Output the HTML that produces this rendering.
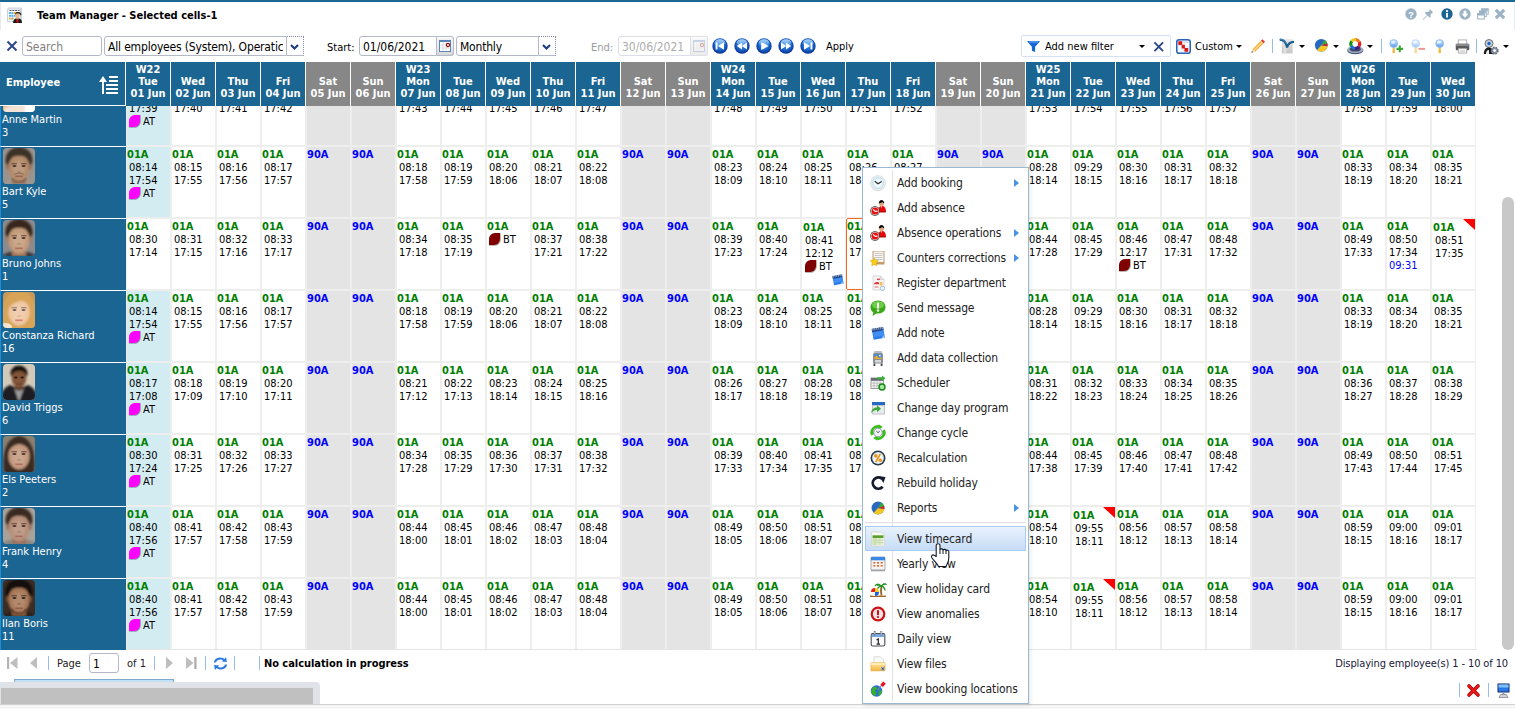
<!DOCTYPE html><html><head><meta charset="utf-8"><title>Team Manager</title><style>
*{box-sizing:border-box}
html,body{margin:0;padding:0}
body{width:1515px;height:709px;overflow:hidden;background:#fff;position:relative;font-family:"DejaVu Sans Condensed","Liberation Sans",sans-serif;font-size:11px;color:#000}
.abs{position:absolute}
svg{overflow:visible}
#topbar{left:0;top:0;width:1515px;height:2px;background:#1b6592}
#leftedge{left:0;top:3px;width:1px;height:27px;background:#e4ebf5}
#rightedge{left:1514px;top:3px;width:1px;height:27px;background:#e4ebf5}
#title{left:37px;top:9px;font-weight:bold;font-size:11px;line-height:14px;color:#000;white-space:nowrap}
.inp{position:absolute;top:36px;height:20px;border:1px solid #b5b8c8;border-radius:3px;background:#fff;font-size:12px;line-height:20px;padding-left:3px;white-space:nowrap;overflow:hidden;color:#000}
.trg{position:absolute;top:36px;height:20px;width:17px;border:1px solid #b5b8c8;border-left:none;border-radius:0 3px 3px 0;background:#fff}
.lbl{position:absolute;top:41px;font-size:11px;line-height:14px;white-space:nowrap}
.sep{position:absolute;width:1px;background:#98bdea}
.dd{position:absolute;margin-left:.7px;width:0;height:0;border-left:3px solid transparent;border-right:3px solid transparent;border-top:3px solid #000}
#hdr{left:0;top:62px;width:1515px;height:44px}
.hc{position:absolute;top:0;height:44px;width:44px;background:#1b6592;color:#fff;font-weight:bold;font-size:11px;line-height:12px;text-align:center;display:flex;flex-direction:column;justify-content:flex-end;padding-bottom:6px;white-space:nowrap}
.hc.we{background:#878787}
#emph{position:absolute;left:0;top:0;width:125px;height:43px;background:#1b6592;color:#fff;font-weight:bold;font-size:11px}
#grid{left:0;top:106px;width:1477px;height:544px;overflow:hidden}
.row{position:absolute;left:0;width:1477px;height:72px}
.emp{position:absolute;left:0;top:0;width:126px;height:72px;background:#1b6592;border-top:1px solid #fff;border-left:1px solid #1890e0;color:#fff;font-size:11px;line-height:14px;white-space:nowrap;overflow:hidden}
.emp .ph{position:absolute;left:2px;top:1px;width:32px;height:36px;border-radius:4px;overflow:hidden}
.emp .nm{position:absolute;left:1px;top:38px}
.emp .no{position:absolute;left:1px;top:51px}
.c{position:absolute;top:0;width:45px;height:72px;border:1px solid #eee;background:#fff;font-size:11px;line-height:13px;white-space:nowrap;overflow:hidden;padding-top:1px}
.c.we{background:#e4e4e4}
.c.fd{background:#d2ecf2}
.c.sh{padding-top:2px}
.c.sh .t{padding-left:3px}.c.sh b{padding-left:1px}.c.sh .mk{margin-left:2.700px}
.c.sel{border:1px solid #f06a1a;border-radius:2px}
.c b{display:block}
.g{color:#007f00}
.bl{color:#0000ff}
.t{display:block;padding-left:2px}
.mk{display:inline-block;width:11px;height:11.500px;border-radius:6px 0 6px 0;margin:0 3.300px 0 1.700px;vertical-align:-1.800px;box-shadow:.5px .5px 0 .3px rgba(90,90,90,.55)}
.rc{position:absolute;right:0;top:0;width:0;height:0;border-top:11.500px solid #f00;border-left:12px solid transparent}
#paging{left:0;top:650px;width:1515px;height:28px;font-size:11px;line-height:14px;color:#222}
#menu{left:862px;top:167px;width:167px;height:537px;background:#fff;border:1px solid #98b8d4;font-size:12px;color:#222;letter-spacing:-.15px;box-shadow:2px 2px 3px rgba(0,0,0,.08)}
#menu .vl{position:absolute;left:29px;top:2px;width:1px;height:531px;background:#e2e2e2}
.mi{position:absolute;left:2px;width:161px;height:25px;line-height:26px;padding-left:32px;white-space:nowrap}
.mi.hl{border:1px solid #a9cbf5;background:linear-gradient(#e9f2fd,#c6dcf6);line-height:24px;padding-left:31px}
.ma{position:absolute;left:149px;top:9px;width:0;height:0;border-top:4.500px solid transparent;border-bottom:4.500px solid transparent;border-left:5px solid #4a92e6}
</style></head><body>
<svg width="0" height="0" style="position:absolute"><defs>
<radialGradient id="gb" cx=".5" cy=".42" r=".58"><stop offset="0" stop-color="#4aa4ee"/><stop offset=".55" stop-color="#1c68d0"/><stop offset="1" stop-color="#08308c"/></radialGradient>
<linearGradient id="gbh" x1="0" y1="0" x2="0" y2="1"><stop offset="0" stop-color="#d8f0ff" stop-opacity=".85"/><stop offset="1" stop-color="#9cd4ff" stop-opacity=".1"/></linearGradient>
<linearGradient id="ggray2" x1="0" y1="0" x2="0" y2="1"><stop offset="0" stop-color="#e6e6e6"/><stop offset="1" stop-color="#c6c6c6"/></linearGradient><linearGradient id="ggray" x1="0" y1="0" x2="0" y2="1"><stop offset="0" stop-color="#f4f4f4"/><stop offset="1" stop-color="#b8b8b8"/></linearGradient>
<linearGradient id="gfold" x1="0" y1="0" x2="0" y2="1"><stop offset="0" stop-color="#ffe9a8"/><stop offset="1" stop-color="#f3b53c"/></linearGradient>
<linearGradient id="gmag" x1="0" y1="0" x2="0" y2="1"><stop offset="0" stop-color="#cfe6ff"/><stop offset="1" stop-color="#5aa0f0"/></linearGradient>
<filter id="bl1"><feGaussianBlur stdDeviation="1.1"/></filter>
<filter id="bl2"><feGaussianBlur stdDeviation="1.8"/></filter>
<filter id="bl05"><feGaussianBlur stdDeviation="0.6"/></filter>
</defs></svg>
<div class="abs" id="topbar"></div><div class="abs" id="leftedge"></div><div class="abs" id="rightedge"></div>
<svg class="abs" style="left:7px;top:7px" width="16" height="16" viewBox="0 0 16 16" ><rect x="1.500" y="1" width="13" height="12.500" fill="#f8fbff" stroke="#c0c8d4" stroke-width=".8"/><rect x=".6" y="2" width="13" height="12.500" fill="#fdfeff" stroke="#c0c8d4" stroke-width=".8"/><path d="M2.500 3.500h10" stroke="#555" stroke-width="1" stroke-dasharray="2 .8"/><g fill="#4ab0f0"><rect x="2" y="5" width="1.800" height="2"/><rect x="4.300" y="5" width="1.800" height="2"/><rect x="11" y="5" width="1.800" height="2"/><rect x="2" y="7.800" width="1.800" height="2"/><rect x="4.300" y="7.800" width="1.800" height="2"/><rect x="6.600" y="7.800" width="1.800" height="2"/><rect x="4.300" y="10.600" width="1.800" height="2"/></g><g fill="#f8a818"><rect x="6.600" y="5" width="1.800" height="2"/><rect x="8.900" y="5" width="1.800" height="2"/><rect x="2" y="10.600" width="1.800" height="2"/><rect x="5.500" y="10.600" width="1.200" height="2"/></g><path d="M6 16c0-3 1.500-4.800 4.500-4.800S15 13 15 16z" fill="#181818"/><path d="M9.300 11.400h2.400L10.500 14z" fill="#fff"/><path d="M10 11.500h1l.6 3.500-1.100 1-1.100-1z" fill="#e01010"/><ellipse cx="10.500" cy="8.800" rx="2.300" ry="2.700" fill="#e8b888"/><path d="M8 8.200c0-2.400 5-3 5.400 0 0 0 .6.200 1-.3-.2-2.500-2-3-3.800-3S7.800 6 8 8.200z" fill="#181818"/></svg>
<div class="abs" id="title">Team Manager - Selected cells-1</div>
<svg class="abs" style="left:1405px;top:8px" width="12" height="12" viewBox="0 0 12 12" ><circle cx="6" cy="6" r="5.700" fill="#9bb3c4"/><text x="6" y="9.600" text-anchor="middle" font-family="Liberation Sans,sans-serif" font-weight="bold" font-size="9.500" fill="#fff">?</text></svg>
<svg class="abs" style="left:1422px;top:8px" width="12" height="12" viewBox="0 0 12 12" ><path d="M7.500 .8l3.700 3.700-1.200.4-1.500 1.500.2 2.400-1 1-2.200-2.200L1 12l-.4-.4 4.400-4.500L2.800 4.900l1-1 2.400.2 1.500-1.500z" fill="#9bb3c4"/></svg>
<svg class="abs" style="left:1441px;top:8px" width="12" height="12" viewBox="0 0 12 12" ><circle cx="6" cy="6" r="5.700" fill="#1b6592"/><rect x="5.100" y="5" width="1.800" height="4.600" fill="#fff"/><circle cx="6" cy="3.200" r="1.100" fill="#fff"/></svg>
<svg class="abs" style="left:1459px;top:8px" width="12" height="12" viewBox="0 0 12 12" ><circle cx="6" cy="6" r="5.700" fill="#9bb3c4"/><path d="M4.600 2.800h2.800v3h2L6 9.800 2.600 5.800h2z" fill="#fff"/></svg>
<svg class="abs" style="left:1477px;top:8px" width="12" height="12" viewBox="0 0 12 12" ><rect x="4.500" y=".8" width="6.700" height="5.500" fill="#fff" stroke="#9bb3c4" stroke-width="1"/><rect x="4.500" y=".8" width="6.700" height="2" fill="#9bb3c4"/><rect x="2.500" y="3" width="6.700" height="5.500" fill="#fff" stroke="#9bb3c4" stroke-width="1"/><rect x="2.500" y="3" width="6.700" height="2" fill="#9bb3c4"/><rect x=".6" y="5.500" width="6.700" height="5.500" fill="#fff" stroke="#9bb3c4" stroke-width="1"/><rect x=".6" y="5.500" width="6.700" height="2" fill="#9bb3c4"/></svg>
<svg class="abs" style="left:1494px;top:8px" width="12" height="12" viewBox="0 0 12 12" ><path d="M1.800 1.800L10.200 10.200M10.200 1.800L1.800 10.200" stroke="#9bb3c4" stroke-width="3.200" fill="none"/></svg>
<svg class="abs" style="left:6px;top:40px" width="12" height="12" viewBox="0 0 12 12" ><path d="M1.5 1.5L10.5 10.5M10.5 1.5L1.5 10.5" stroke="#2c4888" stroke-width="2" fill="none"/></svg>
<div class="inp" style="left:22px;width:80px;color:#808080">Search</div>
<div class="inp" style="left:104px;width:183px;border-radius:3px 0 0 3px;letter-spacing:-.17px">All employees (System), Operatic<i class="abs" style="right:0;top:0;width:3px;height:18px;background:#fff"></i></div>
<div class="trg" style="left:287px;border-radius:0;border-style:dotted solid solid none;border-top-color:#8888b8;border-right:1px dotted #8888b8"><svg class="abs" style="left:3px;top:6.5px" width="9" height="6" viewBox="0 0 9 6" ><path d="M1 1L4.500 4.500 8 1" stroke="#1c3c80" stroke-width="2.100" fill="none"/></svg></div>
<div class="lbl" style="left:327px">Start:</div>
<div class="inp" style="left:359px;width:78px;border-radius:3px 0 0 3px">01/06/2021</div>
<div class="trg" style="left:437px;background:linear-gradient(#fff 0,#fff 1px,#f3f3f3 1px,#efefef 50%,#d6d6d6 100%)"><svg class="abs" style="left:2px;top:3px" width="12" height="12" viewBox="0 0 12 12" ><rect x=".5" y=".5" width="11" height="11" fill="#fff" stroke="#5c84ba"/><rect x="0" y="0" width="12" height="2" fill="#5c84ba"/><path d="M1.500 5h9M1.500 8h9M4 2.500v8.500M7 2.500v8.500" stroke="#dcdcdc" stroke-width="1"/><circle cx="9" cy="5" r="1.600" fill="#fff" stroke="#8e0000" stroke-width="1.100"/></svg></div>
<div class="inp" style="left:456px;width:83px;border-radius:3px 0 0 3px;letter-spacing:-.2px">Monthly</div>
<div class="trg" style="left:539px;border-radius:0;border-style:dotted solid solid none;border-top-color:#8888b8;border-right:1px dotted #8888b8"><svg class="abs" style="left:3px;top:6.5px" width="9" height="6" viewBox="0 0 9 6" ><path d="M1 1L4.500 4.500 8 1" stroke="#1c3c80" stroke-width="2.100" fill="none"/></svg></div>
<div class="lbl" style="left:591px;color:#9c9c9c">End:</div>
<div class="inp" style="left:618px;width:73px;color:#adadad;border-color:#dcdee8;border-radius:3px 0 0 3px">30/06/2021</div>
<div class="trg" style="left:691px;border-color:#dcdee8;background:linear-gradient(#fff 0,#fff 1px,#f8f8f8 1px,#ececec 100%)"><svg class="abs" style="left:2px;top:3px" width="12" height="12" viewBox="0 0 12 12" ><g opacity=".3"><rect x=".5" y=".5" width="11" height="11" fill="#fff" stroke="#5c84ba"/><rect x="0" y="0" width="12" height="2" fill="#5c84ba"/><path d="M1.500 5h9M1.500 8h9M4 2.500v8.500M7 2.500v8.500" stroke="#dcdcdc" stroke-width="1"/><circle cx="9" cy="5" r="1.600" fill="#fff" stroke="#8e0000" stroke-width="1.100"/></g></svg></div>
<svg class="abs" style="left:712px;top:37.8px" width="16" height="16" viewBox="0 0 16 16" ><g><circle cx="8" cy="8" r="7.700" fill="url(#gb)"/><ellipse cx="8" cy="4.800" rx="5.400" ry="3.600" fill="url(#gbh)"/><rect x="3.600" y="4.500" width="1.900" height="7" fill="#fff"/><path d="M12 4.300v7.400L6 8z" fill="#fff"/></g></svg>
<svg class="abs" style="left:734px;top:37.8px" width="16" height="16" viewBox="0 0 16 16" ><g><circle cx="8" cy="8" r="7.700" fill="url(#gb)"/><ellipse cx="8" cy="4.800" rx="5.400" ry="3.600" fill="url(#gbh)"/><path d="M8 4.500v7L2.800 8zM13 4.500v7L7.800 8z" fill="#fff"/></g></svg>
<svg class="abs" style="left:756px;top:37.8px" width="16" height="16" viewBox="0 0 16 16" ><g><circle cx="8" cy="8" r="7.700" fill="url(#gb)"/><ellipse cx="8" cy="4.800" rx="5.400" ry="3.600" fill="url(#gbh)"/><path d="M5.200 3.900v8.200L12.600 8z" fill="#fff"/></g></svg>
<svg class="abs" style="left:778px;top:37.8px" width="16" height="16" viewBox="0 0 16 16" ><g><circle cx="8" cy="8" r="7.700" fill="url(#gb)"/><ellipse cx="8" cy="4.800" rx="5.400" ry="3.600" fill="url(#gbh)"/><path d="M8 4.500v7L13.200 8zM3 4.500v7L8.200 8z" fill="#fff"/></g></svg>
<svg class="abs" style="left:800px;top:37.8px" width="16" height="16" viewBox="0 0 16 16" ><g><circle cx="8" cy="8" r="7.700" fill="url(#gb)"/><ellipse cx="8" cy="4.800" rx="5.400" ry="3.600" fill="url(#gbh)"/><rect x="10.500" y="4.500" width="1.900" height="7" fill="#fff"/><path d="M4 4.300v7.400L10 8z" fill="#fff"/></g></svg>
<div class="lbl" style="left:826px;top:40px">Apply</div>
<div class="abs" style="left:1021px;top:35px;width:150px;height:22px;border:1px solid #d4e1f2;border-radius:2px"></div>
<svg class="abs" style="left:1026.5px;top:38.5px" width="13" height="14.5" viewBox="0 0 16 16" ><path d="M1 1.5h14c.6 0 .6.9.2 1.4L10 8.6V15l-4-1.6V8.6L.8 2.9C.4 2.4.4 1.500 1 1.500z" fill="#1565d8"/><path d="M2 2h12l-1 1.300H3z" fill="#7fb4ff"/></svg>
<div class="lbl" style="left:1045px;top:40px">Add new filter</div>
<div class="dd" style="left:1138px;top:45px"></div>
<svg class="abs" style="left:1153px;top:40.5px" width="11.5" height="11.5" viewBox="0 0 12 12" ><path d="M1.5 1.5L10.5 10.5M10.5 1.5L1.5 10.5" stroke="#2c4888" stroke-width="2" fill="none"/></svg>
<svg class="abs" style="left:1175.5px;top:38.5px" width="15" height="15" viewBox="0 0 16 16" ><rect x=".8" y=".8" width="14.400" height="14.400" rx="2.500" fill="#eef3fa" stroke="#2a62b8" stroke-width="1.600"/><rect x="2.500" y="2.500" width="11" height="2" fill="#d8dde6"/><path d="M2.5 2.5h4v3.500h3v3.500h3.500v4h-4v-3.500h-3v-3.500h-3.500z" fill="#d81818"/><path d="M2.5 8h3v5.500h-3zM9.500 4.500h4v2.500h-4z" fill="#fff" opacity=".7"/></svg>
<div class="lbl" style="left:1195px;top:40px">Custom</div>
<div class="dd" style="left:1235px;top:45px"></div>
<svg class="abs" style="left:1250px;top:38px" width="16.5" height="16" viewBox="0 0 16 16" ><path d="M12.2 1.200l2.600 2.600-1.600 1.600-2.600-2.600z" fill="#e04040"/><path d="M10.600 2.800l2.600 2.600-8.400 8.400-2.600-2.600z" fill="#f0b040"/><path d="M11.400 3.600l1 1-8.400 8.400-1-1z" fill="#ffd880"/><path d="M2.200 11.200l2.600 2.600-3.600 1z" fill="#f4d8b0"/><path d="M1.200 14.800l.5-1.700 1.200 1.200z" fill="#444"/></svg>
<div class="sep" style="left:1272px;top:39px;height:14px"></div>
<svg class="abs" style="left:1279px;top:38px" width="16" height="16" viewBox="0 0 16 16" ><rect x="2.900" y="1.100" width="10.700" height="14.300" fill="url(#ggray2)"/><rect x="4.500" y="8" width="3" height="7" fill="#ececec" opacity=".6"/><path d="M.7 1.600C4.500 1.600 7.300 4.500 8 9.500M15 3.800C11.500 3.800 8.800 5.800 8 9.500" fill="none" stroke="#1b5c8e" stroke-width="2.200"/><path d="M.7 1.200C4 1.200 6.500 3 7.600 6" fill="none" stroke="#4a9ad0" stroke-width=".8"/></svg>
<div class="dd" style="left:1298px;top:45px"></div>
<svg class="abs" style="left:1313.7px;top:38px" width="14.5" height="14.5" viewBox="0 0 16 16" ><circle cx="8" cy="8" r="7" fill="#2868c0"/><path d="M8 8L14.900 9.200A7 7 0 0 1 3.400 13.300z" fill="#f4c820"/><path d="M8 8L11.500 1.900A7 7 0 0 1 14.700 6z" fill="#38a838"/><path d="M8 8L14.700 6A7 7 0 0 1 14.900 9.200z" fill="#e02020"/></svg>
<div class="dd" style="left:1332px;top:45px"></div>
<svg class="abs" style="left:1347px;top:38px" width="16.5" height="16.5" viewBox="0 0 16 16" ><ellipse cx="8" cy="12.200" rx="7.800" ry="3.500" fill="#4e5c78"/><ellipse cx="8" cy="11.200" rx="7.800" ry="3.400" fill="#a4b0c6"/><ellipse cx="8" cy="11" rx="5.600" ry="2.100" fill="#3c4864"/><circle cx="8" cy="5.800" r="4.200" fill="none" stroke="#e82020" stroke-width="3.200" stroke-dasharray="4.500 21.900" stroke-dashoffset="-0.00" transform="rotate(-30 8 5.800)"/><circle cx="8" cy="5.800" r="4.200" fill="none" stroke="#4a1a80" stroke-width="3.200" stroke-dasharray="4.500 21.900" stroke-dashoffset="-4.40" transform="rotate(-30 8 5.800)"/><circle cx="8" cy="5.800" r="4.200" fill="none" stroke="#1870d0" stroke-width="3.200" stroke-dasharray="4.500 21.900" stroke-dashoffset="-8.80" transform="rotate(-30 8 5.800)"/><circle cx="8" cy="5.800" r="4.200" fill="none" stroke="#189018" stroke-width="3.200" stroke-dasharray="4.500 21.900" stroke-dashoffset="-13.20" transform="rotate(-30 8 5.800)"/><circle cx="8" cy="5.800" r="4.200" fill="none" stroke="#e8c820" stroke-width="3.200" stroke-dasharray="4.500 21.900" stroke-dashoffset="-17.60" transform="rotate(-30 8 5.800)"/><circle cx="8" cy="5.800" r="4.200" fill="none" stroke="#f07818" stroke-width="3.200" stroke-dasharray="4.500 21.900" stroke-dashoffset="-22.00" transform="rotate(-30 8 5.800)"/><circle cx="8" cy="5.800" r="2.600" fill="#fff"/></svg>
<div class="dd" style="left:1366px;top:45px"></div>
<div class="sep" style="left:1381px;top:39px;height:14px"></div>
<svg class="abs" style="left:1389px;top:38.5px" width="15" height="15" viewBox="0 0 16 16" ><path d="M4.200 8h1.600l.6 6.500c0 .8-2.800.8-2.800 0z" fill="#f0b838"/><circle cx="5" cy="4.800" r="4.200" fill="url(#gmag)" stroke="#88b8ec" stroke-width=".8"/><ellipse cx="4.400" cy="3.400" rx="2.400" ry="1.600" fill="#fff" opacity=".7"/><path d="M11.500 7v7M8 10.500h7" stroke="#38a838" stroke-width="2.200"/></svg>
<svg class="abs" style="left:1410.5px;top:38.5px" width="15" height="15" viewBox="0 0 16 16" ><g opacity=".55"><path d="M4.200 8h1.600l.6 6.500c0 .8-2.800.8-2.800 0z" fill="#f0b838"/><circle cx="5" cy="4.800" r="4.200" fill="url(#gmag)" stroke="#88b8ec" stroke-width=".8"/><ellipse cx="4.400" cy="3.400" rx="2.400" ry="1.600" fill="#fff" opacity=".7"/></g><path d="M8 10.500h7" stroke="#f09090" stroke-width="2"/></svg>
<svg class="abs" style="left:1434.5px;top:38.5px" width="15" height="15" viewBox="0 0 16 16" ><path d="M4.200 8h1.600l.6 6.500c0 .8-2.800.8-2.800 0z" fill="#f0b838"/><circle cx="5" cy="4.800" r="4.200" fill="url(#gmag)" stroke="#88b8ec" stroke-width=".8"/><ellipse cx="4.400" cy="3.400" rx="2.400" ry="1.600" fill="#fff" opacity=".7"/></svg>
<svg class="abs" style="left:1455px;top:38.5px" width="15" height="15" viewBox="0 0 16 16" ><rect x="3.500" y="1" width="9" height="5" fill="#fff" stroke="#999" stroke-width=".8"/><rect x=".8" y="5" width="14.400" height="7" rx="1.200" fill="#5a5a5a"/><rect x=".8" y="5" width="14.400" height="2.500" rx="1.200" fill="#8a8a8a"/><rect x="3.500" y="10" width="9" height="5" fill="#fff" stroke="#999" stroke-width=".8"/><path d="M5 12h6M5 13.500h6" stroke="#bbb" stroke-width=".7"/><circle cx="13.300" cy="7.300" r=".8" fill="#5090f0"/></svg>
<div class="sep" style="left:1476px;top:39px;height:14px"></div>
<svg class="abs" style="left:1482.5px;top:38.5px" width="16" height="16" viewBox="0 0 16 16" ><circle cx="6" cy="4.500" r="4" fill="#c8ccd2" stroke="#555" stroke-width=".8"/><circle cx="6" cy="4.500" r="1.700" fill="#1868d0"/><path d="M.8 15c0-4 1.800-6.500 5.200-6.500 2 0 3.400 1 4 2.500v4z" fill="#1a1a1a"/><path d="M3 15c0-2.500 1-4 3-4v4z" fill="#eee"/><circle cx="11.600" cy="11.600" r="3.300" fill="#8894a4" stroke="#687080" stroke-width="1.600" stroke-dasharray="1.700 1"/><circle cx="11.600" cy="11.600" r="1.300" fill="#fff"/></svg>
<div class="dd" style="left:1502px;top:45px"></div>
<div class="abs" id="hdr"><div id="emph"><span class="abs" style="left:6px;top:14px;line-height:14px">Employee</span><svg class="abs" style="left:99px;top:14px" width="19" height="18" viewBox="0 0 19 18" ><path d="M4 0L8 6H5V18H3V6H0zM10 0h9v2h-9zM10 4h9v2h-9zM7 8h12v2H7zM7 12h12v2H7zM7 16h12v2H7z" fill="#fff"/></svg></div>
<div class="hc" style="left:126px">W22<br>Tue<br>01 Jun</div>
<div class="hc" style="left:171px">Wed<br>02 Jun</div>
<div class="hc" style="left:216px">Thu<br>03 Jun</div>
<div class="hc" style="left:261px">Fri<br>04 Jun</div>
<div class="hc we" style="left:306px">Sat<br>05 Jun</div>
<div class="hc we" style="left:351px">Sun<br>06 Jun</div>
<div class="hc" style="left:396px">W23<br>Mon<br>07 Jun</div>
<div class="hc" style="left:441px">Tue<br>08 Jun</div>
<div class="hc" style="left:486px">Wed<br>09 Jun</div>
<div class="hc" style="left:531px">Thu<br>10 Jun</div>
<div class="hc" style="left:576px">Fri<br>11 Jun</div>
<div class="hc we" style="left:621px">Sat<br>12 Jun</div>
<div class="hc we" style="left:666px">Sun<br>13 Jun</div>
<div class="hc" style="left:711px">W24<br>Mon<br>14 Jun</div>
<div class="hc" style="left:756px">Tue<br>15 Jun</div>
<div class="hc" style="left:801px">Wed<br>16 Jun</div>
<div class="hc" style="left:846px">Thu<br>17 Jun</div>
<div class="hc" style="left:891px">Fri<br>18 Jun</div>
<div class="hc we" style="left:936px">Sat<br>19 Jun</div>
<div class="hc we" style="left:981px">Sun<br>20 Jun</div>
<div class="hc" style="left:1026px">W25<br>Mon<br>21 Jun</div>
<div class="hc" style="left:1071px">Tue<br>22 Jun</div>
<div class="hc" style="left:1116px">Wed<br>23 Jun</div>
<div class="hc" style="left:1161px">Thu<br>24 Jun</div>
<div class="hc" style="left:1206px">Fri<br>25 Jun</div>
<div class="hc we" style="left:1251px">Sat<br>26 Jun</div>
<div class="hc we" style="left:1296px">Sun<br>27 Jun</div>
<div class="hc" style="left:1341px">W26<br>Mon<br>28 Jun</div>
<div class="hc" style="left:1386px">Tue<br>29 Jun</div>
<div class="hc" style="left:1431px">Wed<br>30 Jun</div>
</div>
<div class="abs" id="grid">
<div class="row" style="top:-32px">
<div class="emp"><div class="ph"><svg width="32" height="36" viewBox="0 0 32 36" style="display:block"><rect width="32" height="36" fill="#e8b48c"/><g filter="url(#bl1)"><path d="M-2 38c2-7 8-8 12-9h12c5 1 10 3 12 9z" fill="#f4e4d8"/><rect x="22" y="28" width="12" height="10" fill="#fff"/><ellipse cx="16" cy="18" rx="9" ry="11" fill="#f0c0a0"/></g></svg></div><span class="nm">Anne Martin</span><span class="no">3</span></div>
<div class="c fd" style="left:126px"><b class="g">01A</b><span class="t">07:59</span><span class="t">17:39</span><span class="t" style="padding-left:0"><i class="mk" style="background:#ff00ff"></i>AT</span></div>
<div class="c" style="left:171px"><b class="g">01A</b><span class="t">08:00</span><span class="t">17:40</span></div>
<div class="c" style="left:216px"><b class="g">01A</b><span class="t">08:01</span><span class="t">17:41</span></div>
<div class="c" style="left:261px"><b class="g">01A</b><span class="t">08:02</span><span class="t">17:42</span></div>
<div class="c we" style="left:306px"><b class="bl">90A</b></div>
<div class="c we" style="left:351px"><b class="bl">90A</b></div>
<div class="c" style="left:396px"><b class="g">01A</b><span class="t">08:03</span><span class="t">17:43</span></div>
<div class="c" style="left:441px"><b class="g">01A</b><span class="t">08:04</span><span class="t">17:44</span></div>
<div class="c" style="left:486px"><b class="g">01A</b><span class="t">08:05</span><span class="t">17:45</span></div>
<div class="c" style="left:531px"><b class="g">01A</b><span class="t">08:06</span><span class="t">17:46</span></div>
<div class="c" style="left:576px"><b class="g">01A</b><span class="t">08:07</span><span class="t">17:47</span></div>
<div class="c we" style="left:621px"><b class="bl">90A</b></div>
<div class="c we" style="left:666px"><b class="bl">90A</b></div>
<div class="c" style="left:711px"><b class="g">01A</b><span class="t">08:08</span><span class="t">17:48</span></div>
<div class="c" style="left:756px"><b class="g">01A</b><span class="t">08:09</span><span class="t">17:49</span></div>
<div class="c" style="left:801px"><b class="g">01A</b><span class="t">08:10</span><span class="t">17:50</span></div>
<div class="c" style="left:846px"><b class="g">01A</b><span class="t">08:11</span><span class="t">17:51</span></div>
<div class="c" style="left:891px"><b class="g">01A</b><span class="t">08:12</span><span class="t">17:52</span></div>
<div class="c we" style="left:936px"><b class="bl">90A</b></div>
<div class="c we" style="left:981px"><b class="bl">90A</b></div>
<div class="c" style="left:1026px"><b class="g">01A</b><span class="t">08:13</span><span class="t">17:53</span></div>
<div class="c" style="left:1071px"><b class="g">01A</b><span class="t">08:14</span><span class="t">17:54</span></div>
<div class="c" style="left:1116px"><b class="g">01A</b><span class="t">08:15</span><span class="t">17:55</span></div>
<div class="c" style="left:1161px"><b class="g">01A</b><span class="t">08:16</span><span class="t">17:56</span></div>
<div class="c" style="left:1206px"><b class="g">01A</b><span class="t">08:17</span><span class="t">17:57</span></div>
<div class="c we" style="left:1251px"><b class="bl">90A</b></div>
<div class="c we" style="left:1296px"><b class="bl">90A</b></div>
<div class="c" style="left:1341px"><b class="g">01A</b><span class="t">08:18</span><span class="t">17:58</span></div>
<div class="c" style="left:1386px"><b class="g">01A</b><span class="t">08:19</span><span class="t">17:59</span></div>
<div class="c" style="left:1431px"><b class="g">01A</b><span class="t">08:20</span><span class="t">18:00</span></div>
</div>
<div class="row" style="top:40px">
<div class="emp"><div class="ph"><svg width="32" height="36" viewBox="0 0 32 36" style="display:block"><rect width="32" height="36" fill="#9a948e"/><g filter="url(#bl1)"><path d="M-3 40c1-5 5-7 10-8h18c5 1 9 3 10 8z" fill="#a09690"/><rect x="9" y="26" width="14" height="10" fill="#96705a"/><ellipse cx="16" cy="12" rx="13.500" ry="13" fill="#3e3028"/><ellipse cx="16" cy="20" rx="10.600" ry="13.500" fill="#b48c6c"/><ellipse cx="16" cy="21" rx="6" ry="8" fill="#ffffff" opacity=".12"/><ellipse cx="4.800" cy="19" rx="1.500" ry="3" fill="#96705a"/><ellipse cx="27.200" cy="19" rx="1.500" ry="3" fill="#96705a"/><path d="M4 15c0-10 5-14 12-14s12 4 12 14c-2-5-5-7-12-7s-10 2-12 7z" fill="#3e3028"/></g><g filter="url(#bl05)" opacity=".8"><path d="M8.500 15.600h5.500M18 15.600h5.500" stroke="#2a1a14" stroke-width="1.100" opacity=".6"/><ellipse cx="11.500" cy="18" rx="2" ry="1" fill="#2a1a14"/><ellipse cx="20.500" cy="18" rx="2" ry="1" fill="#2a1a14"/><path d="M14.300 24h3.400" stroke="#96705a" stroke-width="1.300"/><path d="M12.300 28.300h7.400" stroke="#94584c" stroke-width="1.700"/><path d="M11 26.300c2-1.200 8-1.200 10 0" stroke="#5a4034" stroke-width="1" fill="none" opacity=".6"/><path d="M9 30c2 5 12 5 14 0" stroke="#6a4c3c" stroke-width="2.400" fill="none" opacity=".4"/></g></svg></div><span class="nm">Bart Kyle</span><span class="no">5</span></div>
<div class="c fd" style="left:126px"><b class="g">01A</b><span class="t">08:14</span><span class="t">17:54</span><span class="t" style="padding-left:0"><i class="mk" style="background:#ff00ff"></i>AT</span></div>
<div class="c" style="left:171px"><b class="g">01A</b><span class="t">08:15</span><span class="t">17:55</span></div>
<div class="c" style="left:216px"><b class="g">01A</b><span class="t">08:16</span><span class="t">17:56</span></div>
<div class="c" style="left:261px"><b class="g">01A</b><span class="t">08:17</span><span class="t">17:57</span></div>
<div class="c we" style="left:306px"><b class="bl">90A</b></div>
<div class="c we" style="left:351px"><b class="bl">90A</b></div>
<div class="c" style="left:396px"><b class="g">01A</b><span class="t">08:18</span><span class="t">17:58</span></div>
<div class="c" style="left:441px"><b class="g">01A</b><span class="t">08:19</span><span class="t">17:59</span></div>
<div class="c" style="left:486px"><b class="g">01A</b><span class="t">08:20</span><span class="t">18:06</span></div>
<div class="c" style="left:531px"><b class="g">01A</b><span class="t">08:21</span><span class="t">18:07</span></div>
<div class="c" style="left:576px"><b class="g">01A</b><span class="t">08:22</span><span class="t">18:08</span></div>
<div class="c we" style="left:621px"><b class="bl">90A</b></div>
<div class="c we" style="left:666px"><b class="bl">90A</b></div>
<div class="c" style="left:711px"><b class="g">01A</b><span class="t">08:23</span><span class="t">18:09</span></div>
<div class="c" style="left:756px"><b class="g">01A</b><span class="t">08:24</span><span class="t">18:10</span></div>
<div class="c" style="left:801px"><b class="g">01A</b><span class="t">08:25</span><span class="t">18:11</span></div>
<div class="c" style="left:846px"><b class="g">01A</b><span class="t">08:26</span><span class="t">18:12</span></div>
<div class="c" style="left:891px"><b class="g">01A</b><span class="t">08:27</span><span class="t">18:13</span></div>
<div class="c we" style="left:936px"><b class="bl">90A</b></div>
<div class="c we" style="left:981px"><b class="bl">90A</b></div>
<div class="c" style="left:1026px"><b class="g">01A</b><span class="t">08:28</span><span class="t">18:14</span></div>
<div class="c" style="left:1071px"><b class="g">01A</b><span class="t">09:29</span><span class="t">18:15</span></div>
<div class="c" style="left:1116px"><b class="g">01A</b><span class="t">08:30</span><span class="t">18:16</span></div>
<div class="c" style="left:1161px"><b class="g">01A</b><span class="t">08:31</span><span class="t">18:17</span></div>
<div class="c" style="left:1206px"><b class="g">01A</b><span class="t">08:32</span><span class="t">18:18</span></div>
<div class="c we" style="left:1251px"><b class="bl">90A</b></div>
<div class="c we" style="left:1296px"><b class="bl">90A</b></div>
<div class="c" style="left:1341px"><b class="g">01A</b><span class="t">08:33</span><span class="t">18:19</span></div>
<div class="c" style="left:1386px"><b class="g">01A</b><span class="t">08:34</span><span class="t">18:20</span></div>
<div class="c" style="left:1431px"><b class="g">01A</b><span class="t">08:35</span><span class="t">18:21</span></div>
</div>
<div class="row" style="top:112px">
<div class="emp"><div class="ph"><svg width="32" height="36" viewBox="0 0 32 36" style="display:block"><rect width="32" height="36" fill="#8c8a8c"/><g filter="url(#bl1)"><path d="M-3 40c1-5 5-7 10-8h18c5 1 9 3 10 8z" fill="#3c3c44"/><rect x="9" y="26" width="14" height="10" fill="#a47c60"/><ellipse cx="16" cy="12" rx="13.500" ry="13" fill="#38261c"/><ellipse cx="16" cy="20" rx="10.600" ry="13.500" fill="#c49c7c"/><ellipse cx="16" cy="21" rx="6" ry="8" fill="#ffffff" opacity=".12"/><ellipse cx="4.800" cy="19" rx="1.500" ry="3" fill="#a47c60"/><ellipse cx="27.200" cy="19" rx="1.500" ry="3" fill="#a47c60"/><path d="M4 15c0-10 5-14 12-14s12 4 12 14c-2-5-5-7-12-7s-10 2-12 7z" fill="#38261c"/></g><g filter="url(#bl05)" opacity=".8"><path d="M8.500 15.600h5.500M18 15.600h5.500" stroke="#2a1a14" stroke-width="1.100" opacity=".6"/><ellipse cx="11.500" cy="18" rx="2" ry="1" fill="#2a1a14"/><ellipse cx="20.500" cy="18" rx="2" ry="1" fill="#2a1a14"/><path d="M14.300 24h3.400" stroke="#a47c60" stroke-width="1.300"/><path d="M12.300 28.300h7.400" stroke="#a86458" stroke-width="1.700"/></g></svg></div><span class="nm">Bruno Johns</span><span class="no">1</span></div>
<div class="c" style="left:126px"><b class="g">01A</b><span class="t">08:30</span><span class="t">17:14</span></div>
<div class="c" style="left:171px"><b class="g">01A</b><span class="t">08:31</span><span class="t">17:15</span></div>
<div class="c" style="left:216px"><b class="g">01A</b><span class="t">08:32</span><span class="t">17:16</span></div>
<div class="c" style="left:261px"><b class="g">01A</b><span class="t">08:33</span><span class="t">17:17</span></div>
<div class="c we" style="left:306px"><b class="bl">90A</b></div>
<div class="c we" style="left:351px"><b class="bl">90A</b></div>
<div class="c" style="left:396px"><b class="g">01A</b><span class="t">08:34</span><span class="t">17:18</span></div>
<div class="c" style="left:441px"><b class="g">01A</b><span class="t">08:35</span><span class="t">17:19</span></div>
<div class="c" style="left:486px"><b class="g">01A</b><span class="t" style="padding-left:0"><i class="mk" style="background:#800000"></i>BT</span></div>
<div class="c" style="left:531px"><b class="g">01A</b><span class="t">08:37</span><span class="t">17:21</span></div>
<div class="c" style="left:576px"><b class="g">01A</b><span class="t">08:38</span><span class="t">17:22</span></div>
<div class="c we" style="left:621px"><b class="bl">90A</b></div>
<div class="c we" style="left:666px"><b class="bl">90A</b></div>
<div class="c" style="left:711px"><b class="g">01A</b><span class="t">08:39</span><span class="t">17:23</span></div>
<div class="c" style="left:756px"><b class="g">01A</b><span class="t">08:40</span><span class="t">17:24</span></div>
<div class="c sh" style="left:801px"><b class="g">01A</b><span class="t">08:41</span><span class="t">12:12</span><span class="t" style="padding-left:0"><i class="mk" style="background:#800000"></i>BT</span><svg class="abs" style="left:28.5px;top:53px" width="13.5" height="15" viewBox="0 0 16 16" ><g transform="rotate(-10 8 8)"><rect x="2.500" y="3" width="11.500" height="11" fill="#2878e8"/><rect x="2.500" y="3" width="11.500" height="3" fill="#1c3c78"/><path d="M3.500 2.500v2.500M5.500 2.500v2.500M7.500 2.500v2.500M9.500 2.500v2.500M11.500 2.500v2.500M13 2.500v2.500" stroke="#a8b8d0" stroke-width=".9"/><path d="M9.500 14l4.500-3.500V14z" fill="#8cc0ff"/><rect x="3" y="6.500" width="10.500" height="5" fill="#4c98f8" opacity=".7"/></g></svg></div>
<div class="c sel" style="left:846px"><b class="g">01A</b><span class="t">08:42</span><span class="t">17:26</span></div>
<div class="c" style="left:891px"><b class="g">01A</b><span class="t">08:43</span><span class="t">17:27</span></div>
<div class="c we" style="left:936px"><b class="bl">90A</b></div>
<div class="c we" style="left:981px"><b class="bl">90A</b></div>
<div class="c" style="left:1026px"><b class="g">01A</b><span class="t">08:44</span><span class="t">17:28</span></div>
<div class="c" style="left:1071px"><b class="g">01A</b><span class="t">08:45</span><span class="t">17:29</span></div>
<div class="c" style="left:1116px"><b class="g">01A</b><span class="t">08:46</span><span class="t">12:17</span><span class="t" style="padding-left:0"><i class="mk" style="background:#800000"></i>BT</span></div>
<div class="c" style="left:1161px"><b class="g">01A</b><span class="t">08:47</span><span class="t">17:31</span></div>
<div class="c" style="left:1206px"><b class="g">01A</b><span class="t">08:48</span><span class="t">17:32</span></div>
<div class="c we" style="left:1251px"><b class="bl">90A</b></div>
<div class="c we" style="left:1296px"><b class="bl">90A</b></div>
<div class="c" style="left:1341px"><b class="g">01A</b><span class="t">08:49</span><span class="t">17:33</span></div>
<div class="c" style="left:1386px"><b class="g">01A</b><span class="t">08:50</span><span class="t">17:34</span><span class="t bl">09:31</span></div>
<div class="c sh" style="left:1431px"><b class="g">01A</b><span class="t">08:51</span><span class="t">17:35</span><i class="rc"></i></div>
</div>
<div class="row" style="top:184px">
<div class="emp"><div class="ph"><svg width="32" height="36" viewBox="0 0 32 36" style="display:block"><rect width="32" height="36" fill="#c89858"/><g filter="url(#bl1)"><path d="M-3 40c1-5 5-7 10-8h18c5 1 9 3 10 8z" fill="#f8f0e8"/><rect x="9" y="26" width="14" height="10" fill="#dca882"/><path d="M-2 38C-3 20 0 -1 16 -1c16 0 19 21 18 39z" fill="#d8a458"/><ellipse cx="16" cy="20" rx="10.600" ry="13.500" fill="#f0c8a4"/><ellipse cx="16" cy="21" rx="6" ry="8" fill="#ffffff" opacity=".12"/><path d="M3 24c-2-15 5-22 13-22s15 7 13 22c-1-9-4-14-10-15-7 0-14 5-16 15z" fill="#d8a458"/></g><g filter="url(#bl05)" opacity=".8"><path d="M8.500 15.600h5.500M18 15.600h5.500" stroke="#4a4048" stroke-width="1.100" opacity=".6"/><ellipse cx="11.500" cy="18" rx="2" ry="1" fill="#4a4048"/><ellipse cx="20.500" cy="18" rx="2" ry="1" fill="#4a4048"/><path d="M14.300 24h3.400" stroke="#dca882" stroke-width="1.300"/><path d="M12.300 28.300h7.400" stroke="#d07068" stroke-width="1.700"/><ellipse cx="3" cy="35" rx="6" ry="4" fill="#fff" opacity=".9"/></g></svg></div><span class="nm">Constanza Richard</span><span class="no">16</span></div>
<div class="c fd" style="left:126px"><b class="g">01A</b><span class="t">08:14</span><span class="t">17:54</span><span class="t" style="padding-left:0"><i class="mk" style="background:#ff00ff"></i>AT</span></div>
<div class="c" style="left:171px"><b class="g">01A</b><span class="t">08:15</span><span class="t">17:55</span></div>
<div class="c" style="left:216px"><b class="g">01A</b><span class="t">08:16</span><span class="t">17:56</span></div>
<div class="c" style="left:261px"><b class="g">01A</b><span class="t">08:17</span><span class="t">17:57</span></div>
<div class="c we" style="left:306px"><b class="bl">90A</b></div>
<div class="c we" style="left:351px"><b class="bl">90A</b></div>
<div class="c" style="left:396px"><b class="g">01A</b><span class="t">08:18</span><span class="t">17:58</span></div>
<div class="c" style="left:441px"><b class="g">01A</b><span class="t">08:19</span><span class="t">17:59</span></div>
<div class="c" style="left:486px"><b class="g">01A</b><span class="t">08:20</span><span class="t">18:06</span></div>
<div class="c" style="left:531px"><b class="g">01A</b><span class="t">08:21</span><span class="t">18:07</span></div>
<div class="c" style="left:576px"><b class="g">01A</b><span class="t">08:22</span><span class="t">18:08</span></div>
<div class="c we" style="left:621px"><b class="bl">90A</b></div>
<div class="c we" style="left:666px"><b class="bl">90A</b></div>
<div class="c" style="left:711px"><b class="g">01A</b><span class="t">08:23</span><span class="t">18:09</span></div>
<div class="c" style="left:756px"><b class="g">01A</b><span class="t">08:24</span><span class="t">18:10</span></div>
<div class="c" style="left:801px"><b class="g">01A</b><span class="t">08:25</span><span class="t">18:11</span></div>
<div class="c" style="left:846px"><b class="g">01A</b><span class="t">08:26</span><span class="t">18:12</span></div>
<div class="c" style="left:891px"><b class="g">01A</b><span class="t">08:27</span><span class="t">18:13</span></div>
<div class="c we" style="left:936px"><b class="bl">90A</b></div>
<div class="c we" style="left:981px"><b class="bl">90A</b></div>
<div class="c" style="left:1026px"><b class="g">01A</b><span class="t">08:28</span><span class="t">18:14</span></div>
<div class="c" style="left:1071px"><b class="g">01A</b><span class="t">09:29</span><span class="t">18:15</span></div>
<div class="c" style="left:1116px"><b class="g">01A</b><span class="t">08:30</span><span class="t">18:16</span></div>
<div class="c" style="left:1161px"><b class="g">01A</b><span class="t">08:31</span><span class="t">18:17</span></div>
<div class="c" style="left:1206px"><b class="g">01A</b><span class="t">08:32</span><span class="t">18:18</span></div>
<div class="c we" style="left:1251px"><b class="bl">90A</b></div>
<div class="c we" style="left:1296px"><b class="bl">90A</b></div>
<div class="c" style="left:1341px"><b class="g">01A</b><span class="t">08:33</span><span class="t">18:19</span></div>
<div class="c" style="left:1386px"><b class="g">01A</b><span class="t">08:34</span><span class="t">18:20</span></div>
<div class="c" style="left:1431px"><b class="g">01A</b><span class="t">08:35</span><span class="t">18:21</span></div>
</div>
<div class="row" style="top:256px">
<div class="emp"><div class="ph"><svg width="32" height="36" viewBox="0 0 32 36" style="display:block"><rect width="32" height="36" fill="#d2c9b8"/><g filter="url(#bl1)"><path d="M-3 40c0-10 3-16 10-19l9 4 9-4c7 3 10 9 10 19z" fill="#1c1c20"/><path d="M11 24l5 14 5-14-5 3z" fill="#9c9c9c"/><rect x="12" y="19" width="8" height="7" fill="#5c3a28"/><ellipse cx="16" cy="9" rx="8.500" ry="7.500" fill="#18120e"/><ellipse cx="16" cy="14.500" rx="7.300" ry="9.300" fill="#805438"/><path d="M8.500 11c0-6 3-8 7.500-8s7.500 2 7.500 8c-2-3-4-4-7.500-4s-5.500 1-7.500 4z" fill="#18120e"/></g><g filter="url(#bl05)" opacity=".8"><ellipse cx="12.800" cy="13.500" rx="1.700" ry=".9" fill="#120c0a"/><ellipse cx="19.200" cy="13.500" rx="1.700" ry=".9" fill="#120c0a"/><path d="M13.500 20h5" stroke="#6c3c34" stroke-width="1.400"/></g></svg></div><span class="nm">David Triggs</span><span class="no">6</span></div>
<div class="c fd" style="left:126px"><b class="g">01A</b><span class="t">08:17</span><span class="t">17:08</span><span class="t" style="padding-left:0"><i class="mk" style="background:#ff00ff"></i>AT</span></div>
<div class="c" style="left:171px"><b class="g">01A</b><span class="t">08:18</span><span class="t">17:09</span></div>
<div class="c" style="left:216px"><b class="g">01A</b><span class="t">08:19</span><span class="t">17:10</span></div>
<div class="c" style="left:261px"><b class="g">01A</b><span class="t">08:20</span><span class="t">17:11</span></div>
<div class="c we" style="left:306px"><b class="bl">90A</b></div>
<div class="c we" style="left:351px"><b class="bl">90A</b></div>
<div class="c" style="left:396px"><b class="g">01A</b><span class="t">08:21</span><span class="t">17:12</span></div>
<div class="c" style="left:441px"><b class="g">01A</b><span class="t">08:22</span><span class="t">17:13</span></div>
<div class="c" style="left:486px"><b class="g">01A</b><span class="t">08:23</span><span class="t">18:14</span></div>
<div class="c" style="left:531px"><b class="g">01A</b><span class="t">08:24</span><span class="t">18:15</span></div>
<div class="c" style="left:576px"><b class="g">01A</b><span class="t">08:25</span><span class="t">18:16</span></div>
<div class="c we" style="left:621px"><b class="bl">90A</b></div>
<div class="c we" style="left:666px"><b class="bl">90A</b></div>
<div class="c" style="left:711px"><b class="g">01A</b><span class="t">08:26</span><span class="t">18:17</span></div>
<div class="c" style="left:756px"><b class="g">01A</b><span class="t">08:27</span><span class="t">18:18</span></div>
<div class="c" style="left:801px"><b class="g">01A</b><span class="t">08:28</span><span class="t">18:19</span></div>
<div class="c" style="left:846px"><b class="g">01A</b><span class="t">08:29</span><span class="t">18:20</span></div>
<div class="c" style="left:891px"><b class="g">01A</b><span class="t">08:30</span><span class="t">18:21</span></div>
<div class="c we" style="left:936px"><b class="bl">90A</b></div>
<div class="c we" style="left:981px"><b class="bl">90A</b></div>
<div class="c" style="left:1026px"><b class="g">01A</b><span class="t">08:31</span><span class="t">18:22</span></div>
<div class="c" style="left:1071px"><b class="g">01A</b><span class="t">08:32</span><span class="t">18:23</span></div>
<div class="c" style="left:1116px"><b class="g">01A</b><span class="t">08:33</span><span class="t">18:24</span></div>
<div class="c" style="left:1161px"><b class="g">01A</b><span class="t">08:34</span><span class="t">18:25</span></div>
<div class="c" style="left:1206px"><b class="g">01A</b><span class="t">08:35</span><span class="t">18:26</span></div>
<div class="c we" style="left:1251px"><b class="bl">90A</b></div>
<div class="c we" style="left:1296px"><b class="bl">90A</b></div>
<div class="c" style="left:1341px"><b class="g">01A</b><span class="t">08:36</span><span class="t">18:27</span></div>
<div class="c" style="left:1386px"><b class="g">01A</b><span class="t">08:37</span><span class="t">18:28</span></div>
<div class="c" style="left:1431px"><b class="g">01A</b><span class="t">08:38</span><span class="t">18:29</span></div>
</div>
<div class="row" style="top:328px">
<div class="emp"><div class="ph"><svg width="32" height="36" viewBox="0 0 32 36" style="display:block"><rect width="32" height="36" fill="#8a8070"/><g filter="url(#bl1)"><path d="M-3 40c1-5 5-7 10-8h18c5 1 9 3 10 8z" fill="#6c6258"/><rect x="9" y="26" width="14" height="10" fill="#a47c64"/><path d="M1 38C-1 22 1 2 16 0c15 2 17 22 15 38z" fill="#3a2c22"/><ellipse cx="16" cy="20" rx="10.600" ry="13.500" fill="#c49a80"/><ellipse cx="16" cy="21" rx="6" ry="8" fill="#ffffff" opacity=".12"/><path d="M4 20c-1-13 5-18 12-18s13 5 12 18c-2-8-5-11-12-12-6 1-10 4-12 12z" fill="#3a2c22"/></g><g filter="url(#bl05)" opacity=".8"><path d="M8.500 15.600h5.500M18 15.600h5.500" stroke="#2a1a14" stroke-width="1.100" opacity=".6"/><ellipse cx="11.500" cy="18" rx="2" ry="1" fill="#2a1a14"/><ellipse cx="20.500" cy="18" rx="2" ry="1" fill="#2a1a14"/><path d="M14.300 24h3.400" stroke="#a47c64" stroke-width="1.300"/><path d="M12.300 28.300h7.400" stroke="#b0645c" stroke-width="1.700"/></g></svg></div><span class="nm">Els Peeters</span><span class="no">2</span></div>
<div class="c fd" style="left:126px"><b class="g">01A</b><span class="t">08:30</span><span class="t">17:24</span><span class="t" style="padding-left:0"><i class="mk" style="background:#ff00ff"></i>AT</span></div>
<div class="c" style="left:171px"><b class="g">01A</b><span class="t">08:31</span><span class="t">17:25</span></div>
<div class="c" style="left:216px"><b class="g">01A</b><span class="t">08:32</span><span class="t">17:26</span></div>
<div class="c" style="left:261px"><b class="g">01A</b><span class="t">08:33</span><span class="t">17:27</span></div>
<div class="c we" style="left:306px"><b class="bl">90A</b></div>
<div class="c we" style="left:351px"><b class="bl">90A</b></div>
<div class="c" style="left:396px"><b class="g">01A</b><span class="t">08:34</span><span class="t">17:28</span></div>
<div class="c" style="left:441px"><b class="g">01A</b><span class="t">08:35</span><span class="t">17:29</span></div>
<div class="c" style="left:486px"><b class="g">01A</b><span class="t">08:36</span><span class="t">17:30</span></div>
<div class="c" style="left:531px"><b class="g">01A</b><span class="t">08:37</span><span class="t">17:31</span></div>
<div class="c" style="left:576px"><b class="g">01A</b><span class="t">08:38</span><span class="t">17:32</span></div>
<div class="c we" style="left:621px"><b class="bl">90A</b></div>
<div class="c we" style="left:666px"><b class="bl">90A</b></div>
<div class="c" style="left:711px"><b class="g">01A</b><span class="t">08:39</span><span class="t">17:33</span></div>
<div class="c" style="left:756px"><b class="g">01A</b><span class="t">08:40</span><span class="t">17:34</span></div>
<div class="c" style="left:801px"><b class="g">01A</b><span class="t">08:41</span><span class="t">17:35</span></div>
<div class="c" style="left:846px"><b class="g">01A</b><span class="t">08:42</span><span class="t">17:36</span></div>
<div class="c" style="left:891px"><b class="g">01A</b><span class="t">08:43</span><span class="t">17:37</span></div>
<div class="c we" style="left:936px"><b class="bl">90A</b></div>
<div class="c we" style="left:981px"><b class="bl">90A</b></div>
<div class="c" style="left:1026px"><b class="g">01A</b><span class="t">08:44</span><span class="t">17:38</span></div>
<div class="c" style="left:1071px"><b class="g">01A</b><span class="t">08:45</span><span class="t">17:39</span></div>
<div class="c" style="left:1116px"><b class="g">01A</b><span class="t">08:46</span><span class="t">17:40</span></div>
<div class="c" style="left:1161px"><b class="g">01A</b><span class="t">08:47</span><span class="t">17:41</span></div>
<div class="c" style="left:1206px"><b class="g">01A</b><span class="t">08:48</span><span class="t">17:42</span></div>
<div class="c we" style="left:1251px"><b class="bl">90A</b></div>
<div class="c we" style="left:1296px"><b class="bl">90A</b></div>
<div class="c" style="left:1341px"><b class="g">01A</b><span class="t">08:49</span><span class="t">17:43</span></div>
<div class="c" style="left:1386px"><b class="g">01A</b><span class="t">08:50</span><span class="t">17:44</span></div>
<div class="c" style="left:1431px"><b class="g">01A</b><span class="t">08:51</span><span class="t">17:45</span></div>
</div>
<div class="row" style="top:400px">
<div class="emp"><div class="ph"><svg width="32" height="36" viewBox="0 0 32 36" style="display:block"><rect width="32" height="36" fill="#a8a29a"/><g filter="url(#bl1)"><path d="M-3 40c1-5 5-7 10-8h18c5 1 9 3 10 8z" fill="#8c8680"/><rect x="9" y="26" width="14" height="10" fill="#987060"/><ellipse cx="16" cy="12" rx="13.500" ry="13" fill="#3a2a20"/><ellipse cx="16" cy="20" rx="10.600" ry="13.500" fill="#b8907a"/><ellipse cx="16" cy="21" rx="6" ry="8" fill="#ffffff" opacity=".12"/><ellipse cx="4.800" cy="19" rx="1.500" ry="3" fill="#987060"/><ellipse cx="27.200" cy="19" rx="1.500" ry="3" fill="#987060"/><path d="M4 15c0-10 5-14 12-14s12 4 12 14c-2-5-5-7-12-7s-10 2-12 7z" fill="#3a2a20"/></g><g filter="url(#bl05)" opacity=".8"><path d="M8.500 15.600h5.500M18 15.600h5.500" stroke="#2a1a14" stroke-width="1.100" opacity=".6"/><ellipse cx="11.500" cy="18" rx="2" ry="1" fill="#2a1a14"/><ellipse cx="20.500" cy="18" rx="2" ry="1" fill="#2a1a14"/><path d="M14.300 24h3.400" stroke="#987060" stroke-width="1.300"/><path d="M12.300 28.300h7.400" stroke="#a46458" stroke-width="1.700"/></g></svg></div><span class="nm">Frank Henry</span><span class="no">4</span></div>
<div class="c fd" style="left:126px"><b class="g">01A</b><span class="t">08:40</span><span class="t">17:56</span><span class="t" style="padding-left:0"><i class="mk" style="background:#ff00ff"></i>AT</span></div>
<div class="c" style="left:171px"><b class="g">01A</b><span class="t">08:41</span><span class="t">17:57</span></div>
<div class="c" style="left:216px"><b class="g">01A</b><span class="t">08:42</span><span class="t">17:58</span></div>
<div class="c" style="left:261px"><b class="g">01A</b><span class="t">08:43</span><span class="t">17:59</span></div>
<div class="c we" style="left:306px"><b class="bl">90A</b></div>
<div class="c we" style="left:351px"><b class="bl">90A</b></div>
<div class="c" style="left:396px"><b class="g">01A</b><span class="t">08:44</span><span class="t">18:00</span></div>
<div class="c" style="left:441px"><b class="g">01A</b><span class="t">08:45</span><span class="t">18:01</span></div>
<div class="c" style="left:486px"><b class="g">01A</b><span class="t">08:46</span><span class="t">18:02</span></div>
<div class="c" style="left:531px"><b class="g">01A</b><span class="t">08:47</span><span class="t">18:03</span></div>
<div class="c" style="left:576px"><b class="g">01A</b><span class="t">08:48</span><span class="t">18:04</span></div>
<div class="c we" style="left:621px"><b class="bl">90A</b></div>
<div class="c we" style="left:666px"><b class="bl">90A</b></div>
<div class="c" style="left:711px"><b class="g">01A</b><span class="t">08:49</span><span class="t">18:05</span></div>
<div class="c" style="left:756px"><b class="g">01A</b><span class="t">08:50</span><span class="t">18:06</span></div>
<div class="c" style="left:801px"><b class="g">01A</b><span class="t">08:51</span><span class="t">18:07</span></div>
<div class="c" style="left:846px"><b class="g">01A</b><span class="t">08:52</span><span class="t">18:08</span></div>
<div class="c" style="left:891px"><b class="g">01A</b><span class="t">08:53</span><span class="t">18:09</span></div>
<div class="c we" style="left:936px"><b class="bl">90A</b></div>
<div class="c we" style="left:981px"><b class="bl">90A</b></div>
<div class="c" style="left:1026px"><b class="g">01A</b><span class="t">08:54</span><span class="t">18:10</span></div>
<div class="c sh" style="left:1071px"><b class="g">01A</b><span class="t">09:55</span><span class="t">18:11</span><i class="rc"></i></div>
<div class="c" style="left:1116px"><b class="g">01A</b><span class="t">08:56</span><span class="t">18:12</span></div>
<div class="c" style="left:1161px"><b class="g">01A</b><span class="t">08:57</span><span class="t">18:13</span></div>
<div class="c" style="left:1206px"><b class="g">01A</b><span class="t">08:58</span><span class="t">18:14</span></div>
<div class="c we" style="left:1251px"><b class="bl">90A</b></div>
<div class="c we" style="left:1296px"><b class="bl">90A</b></div>
<div class="c" style="left:1341px"><b class="g">01A</b><span class="t">08:59</span><span class="t">18:15</span></div>
<div class="c" style="left:1386px"><b class="g">01A</b><span class="t">09:00</span><span class="t">18:16</span></div>
<div class="c" style="left:1431px"><b class="g">01A</b><span class="t">09:01</span><span class="t">18:17</span></div>
</div>
<div class="row" style="top:472px">
<div class="emp"><div class="ph"><svg width="32" height="36" viewBox="0 0 32 36" style="display:block"><rect width="32" height="36" fill="#3c2c22"/><g filter="url(#bl1)"><path d="M-3 40c1-5 5-7 10-8h18c5 1 9 3 10 8z" fill="#2c201a"/><rect x="9" y="26" width="14" height="10" fill="#86583e"/><ellipse cx="16" cy="12" rx="13.500" ry="13" fill="#120c0a"/><ellipse cx="16" cy="20" rx="10.600" ry="13.500" fill="#aa7a5a"/><ellipse cx="16" cy="21" rx="6" ry="8" fill="#ffffff" opacity=".12"/><ellipse cx="4.800" cy="19" rx="1.500" ry="3" fill="#86583e"/><ellipse cx="27.200" cy="19" rx="1.500" ry="3" fill="#86583e"/><path d="M4 15c0-10 5-14 12-14s12 4 12 14c-2-5-5-7-12-7s-10 2-12 7z" fill="#120c0a"/></g><g filter="url(#bl05)" opacity=".8"><path d="M8.500 15.600h5.500M18 15.600h5.500" stroke="#120c0a" stroke-width="1.100" opacity=".6"/><ellipse cx="11.500" cy="18" rx="2" ry="1" fill="#120c0a"/><ellipse cx="20.500" cy="18" rx="2" ry="1" fill="#120c0a"/><path d="M14.300 24h3.400" stroke="#86583e" stroke-width="1.300"/><path d="M12.300 28.300h7.400" stroke="#8c5444" stroke-width="1.700"/><path d="M9 29c2 5.500 12 5.500 14 0" stroke="#3c281c" stroke-width="2.600" fill="none" opacity=".45"/></g></svg></div><span class="nm">Ilan Boris</span><span class="no">11</span></div>
<div class="c fd" style="left:126px"><b class="g">01A</b><span class="t">08:40</span><span class="t">17:56</span><span class="t" style="padding-left:0"><i class="mk" style="background:#ff00ff"></i>AT</span></div>
<div class="c" style="left:171px"><b class="g">01A</b><span class="t">08:41</span><span class="t">17:57</span></div>
<div class="c" style="left:216px"><b class="g">01A</b><span class="t">08:42</span><span class="t">17:58</span></div>
<div class="c" style="left:261px"><b class="g">01A</b><span class="t">08:43</span><span class="t">17:59</span></div>
<div class="c we" style="left:306px"><b class="bl">90A</b></div>
<div class="c we" style="left:351px"><b class="bl">90A</b></div>
<div class="c" style="left:396px"><b class="g">01A</b><span class="t">08:44</span><span class="t">18:00</span></div>
<div class="c" style="left:441px"><b class="g">01A</b><span class="t">08:45</span><span class="t">18:01</span></div>
<div class="c" style="left:486px"><b class="g">01A</b><span class="t">08:46</span><span class="t">18:02</span></div>
<div class="c" style="left:531px"><b class="g">01A</b><span class="t">08:47</span><span class="t">18:03</span></div>
<div class="c" style="left:576px"><b class="g">01A</b><span class="t">08:48</span><span class="t">18:04</span></div>
<div class="c we" style="left:621px"><b class="bl">90A</b></div>
<div class="c we" style="left:666px"><b class="bl">90A</b></div>
<div class="c" style="left:711px"><b class="g">01A</b><span class="t">08:49</span><span class="t">18:05</span></div>
<div class="c" style="left:756px"><b class="g">01A</b><span class="t">08:50</span><span class="t">18:06</span></div>
<div class="c" style="left:801px"><b class="g">01A</b><span class="t">08:51</span><span class="t">18:07</span></div>
<div class="c" style="left:846px"><b class="g">01A</b><span class="t">08:52</span><span class="t">18:08</span></div>
<div class="c" style="left:891px"><b class="g">01A</b><span class="t">08:53</span><span class="t">18:09</span></div>
<div class="c we" style="left:936px"><b class="bl">90A</b></div>
<div class="c we" style="left:981px"><b class="bl">90A</b></div>
<div class="c" style="left:1026px"><b class="g">01A</b><span class="t">08:54</span><span class="t">18:10</span></div>
<div class="c sh" style="left:1071px"><b class="g">01A</b><span class="t">09:55</span><span class="t">18:11</span><i class="rc"></i></div>
<div class="c" style="left:1116px"><b class="g">01A</b><span class="t">08:56</span><span class="t">18:12</span></div>
<div class="c" style="left:1161px"><b class="g">01A</b><span class="t">08:57</span><span class="t">18:13</span></div>
<div class="c" style="left:1206px"><b class="g">01A</b><span class="t">08:58</span><span class="t">18:14</span></div>
<div class="c we" style="left:1251px"><b class="bl">90A</b></div>
<div class="c we" style="left:1296px"><b class="bl">90A</b></div>
<div class="c" style="left:1341px"><b class="g">01A</b><span class="t">08:59</span><span class="t">18:15</span></div>
<div class="c" style="left:1386px"><b class="g">01A</b><span class="t">09:00</span><span class="t">18:16</span></div>
<div class="c" style="left:1431px"><b class="g">01A</b><span class="t">09:01</span><span class="t">18:17</span></div>
</div>
</div>
<div class="abs" style="left:126px;top:649px;width:1351px;height:1px;background:#e4e4e4"></div>
<div class="abs" style="left:1502px;top:197px;width:12px;height:453px;background:#c8c8c8;border-radius:6px"></div>
<div class="abs" id="paging">
<svg class="abs" style="left:7px;top:7px" width="10.5" height="12" viewBox="0 0 10.5 12" ><rect x="0" y="0" width="2.200" height="12" fill="#b4b4b4"/><path d="M10.500 0v12L3 6z" fill="#bebebe"/></svg>
<svg class="abs" style="left:30px;top:7px" width="7" height="12" viewBox="0 0 7 12" ><path d="M7 0v12L0 6z" fill="#bebebe"/></svg>
<div class="sep" style="left:48px;top:6px;height:14px"></div>
<span class="abs" style="left:57px;top:7px">Page</span>
<div class="abs" style="left:89px;top:3px;width:30px;height:20px;border:1px solid #b5b8c8;border-radius:3px;background:#fff;font-size:12px;line-height:20px;padding-left:3px;color:#000">1</div>
<span class="abs" style="left:127px;top:7px">of 1</span>
<div class="sep" style="left:154px;top:6px;height:14px"></div>
<svg class="abs" style="left:165.5px;top:7px" width="7" height="12" viewBox="0 0 7 12" ><path d="M0 0v12L7 6z" fill="#bebebe"/></svg>
<svg class="abs" style="left:186px;top:7px" width="10.5" height="12" viewBox="0 0 10.5 12" ><rect x="8.300" y="0" width="2.200" height="12" fill="#aaa"/><path d="M0 0v12L7.500 6z" fill="#bebebe"/></svg>
<div class="sep" style="left:205px;top:6px;height:14px"></div>
<svg class="abs" style="left:212.5px;top:5.5px" width="15" height="15" viewBox="0 0 16 16" ><path d="M2.200 7A5.500 4.500 0 0 1 12 4.400" fill="none" stroke="#2a78e0" stroke-width="2.200"/><path d="M9.500 5.800L14.800 6.400 14 1.200z" fill="#2a78e0"/><path d="M13.800 9A5.500 4.500 0 0 1 4 11.600" fill="none" stroke="#2a78e0" stroke-width="2.200"/><path d="M6.500 10.200L1.200 9.600 2 14.800z" fill="#2a78e0"/></svg>
<div class="sep" style="left:234px;top:6px;height:14px"></div>
<div class="sep" style="left:259px;top:6px;height:14px"></div>
<span class="abs" style="left:264px;top:7px;font-weight:bold;color:#000;letter-spacing:-.05px">No calculation in progress</span>
<span class="abs" style="right:7px;top:7px;white-space:nowrap;letter-spacing:-.12px;color:#20203c">Displaying employee(s) 1 - 10 of 10</span>
</div>
<div class="abs" style="left:14px;top:679px;width:160px;height:3px;background:#c3e1f5;border:1px solid #7fa9cf;border-bottom:none"></div>
<div class="abs" style="left:0;top:682px;width:320px;height:22px;background:#dfe3e8;border-radius:0 4px 0 0"></div>
<div class="abs" style="left:1px;top:688px;width:312px;height:16px;background:#c0c0c0"></div>
<div class="abs" style="left:0;top:704px;width:1515px;height:1px;background:#d0d0d0"></div>
<div class="abs" style="left:0;top:705px;width:1515px;height:4px;background:#f6f6f6"></div>
<div class="sep" style="left:1459px;top:683px;height:14px"></div>
<svg class="abs" style="left:1467px;top:683.5px" width="13" height="13" viewBox="0 0 13 13" ><path d="M2 2L11 11M11 2L2 11" stroke="#a00000" stroke-width="3.600" stroke-linecap="round"/><path d="M2 2L11 11M11 2L2 11" stroke="#e81818" stroke-width="2.400" stroke-linecap="round"/></svg>
<div class="sep" style="left:1488px;top:683px;height:14px"></div>
<svg class="abs" style="left:1496.5px;top:682.5px" width="13" height="15" viewBox="0 0 13 15" ><rect x=".5" y=".5" width="12" height="9" rx=".8" fill="#10307a" stroke="#889" stroke-width=".6"/><rect x="1.500" y="1.500" width="10" height="7" fill="#2878e8"/><rect x="1.500" y="1.500" width="10" height="3" fill="#80c0ff"/><rect x="5.500" y="9.500" width="2" height="2" fill="#999"/><path d="M3.500 11.500h6l1.500 3h-9z" fill="#d0d4dc" stroke="#667" stroke-width=".6"/></svg>
<div class="abs" id="menu"><div class="vl"></div>
<div class="mi" style="top:2px"><svg class="abs" style="left:5px;top:5px" width="16" height="16" viewBox="0 0 16 16" ><circle cx="8" cy="8.400" r="7.600" fill="#dcdcdc"/><circle cx="8" cy="8" r="7.500" fill="#efefef" stroke="#d2d2d2" stroke-width=".5"/><circle cx="8" cy="8" r="5.800" fill="#d6eef9" stroke="#b4d4e6" stroke-width=".5"/><circle cx="8" cy="8.300" r="3.800" fill="#f4fbfe"/><path d="M4.800 6.300L8 8.700 11.600 6.500" stroke="#2a2a2a" stroke-width="1.300" fill="none"/></svg>Add booking<i class="ma"></i></div>
<div class="mi" style="top:27px"><svg class="abs" style="left:5px;top:5px" width="16" height="16" viewBox="0 0 16 16" ><path d="M8 12.300c0-3.600 1-6.200 4-6.200s4 2.600 4 6.200z" fill="#e60a0a"/><path d="M8.500 12.300h7.200v-1.200H8.500z" fill="#b00808"/><circle cx="11.500" cy="3.900" r="2.300" fill="#e2a878"/><path d="M8.800 3.600c-.3-4.800 5.700-4.800 5.400 0-.8-.2-1.500-.8-2-1.500-.8.800-2 1.300-3.400 1.500z" fill="#0c0c0c"/><path d="M10.600 6.300h1.800l-.9 1.600z" fill="#fff" opacity=".8"/><circle cx="5" cy="11" r="4.800" fill="#3a3a3a"/><circle cx="5" cy="11" r="4.100" fill="#e8e8e8"/><circle cx="5" cy="11" r="3.500" fill="#ea1010"/><path d="M3 9.400l2.300 2 2.200-.3" stroke="#fff" stroke-width="1.100" fill="none"/></svg>Add absence</div>
<div class="mi" style="top:52px"><svg class="abs" style="left:5px;top:5px" width="16" height="16" viewBox="0 0 16 16" ><path d="M8 12.300c0-3.600 1-6.200 4-6.200s4 2.600 4 6.200z" fill="#e60a0a"/><path d="M8.500 12.300h7.200v-1.200H8.500z" fill="#b00808"/><circle cx="11.500" cy="3.900" r="2.300" fill="#e2a878"/><path d="M8.800 3.600c-.3-4.800 5.700-4.800 5.400 0-.8-.2-1.500-.8-2-1.500-.8.800-2 1.300-3.400 1.500z" fill="#0c0c0c"/><path d="M10.600 6.300h1.800l-.9 1.600z" fill="#fff" opacity=".8"/><circle cx="5" cy="11" r="4.800" fill="#3a3a3a"/><circle cx="5" cy="11" r="4.100" fill="#e8e8e8"/><circle cx="5" cy="11" r="3.500" fill="#ea1010"/><path d="M3 9.400l2.300 2 2.200-.3" stroke="#fff" stroke-width="1.100" fill="none"/></svg>Absence operations<i class="ma"></i></div>
<div class="mi" style="top:77px"><svg class="abs" style="left:5px;top:5px" width="16" height="16" viewBox="0 0 16 16" ><rect x="2.500" y="1" width="12" height="13.500" fill="#c49a6c"/><rect x="3.500" y="1.500" width="10" height="10.500" fill="#f6f6f2"/><path d="M4.500 3.500h8M4.500 5.500h8M4.500 7.500h8M4.500 9.500h8" stroke="#c4c4c4" stroke-width=".9"/><path d="M4.300 7.600l1.300 2.700 3 .4-2.200 2.100.5 3-2.600-1.400-2.600 1.400.5-3L.1 10.700l3-.4z" fill="#f8d018" stroke="#d8a010" stroke-width=".5"/></svg>Counters corrections<i class="ma"></i></div>
<div class="mi" style="top:102px"><svg class="abs" style="left:5px;top:5px" width="16" height="16" viewBox="0 0 16 16" ><path d="M3 1h7.500L14 4.500V15H3z" fill="#f6f6f6" stroke="#c8c8c8" stroke-width=".7"/><path d="M10.500 1v3.500H14" fill="#e4e4e4" stroke="#c8c8c8" stroke-width=".6"/><rect x="7" y="3.500" width="3" height="1.600" fill="#e85050"/><path d="M4 8.500c1-1.600 3.500-2 5-1v1.800H4z" fill="#e83030"/><rect x="9.800" y="7" width="2.600" height="3.500" fill="#f0c050"/><path d="M4.500 12h4" stroke="#e88080" stroke-width="1.200"/><circle cx="12.500" cy="13.300" r="2.200" fill="#e4f0fa" stroke="#90b0d0" stroke-width=".7"/></svg>Register department</div>
<div class="mi" style="top:127px"><svg class="abs" style="left:5px;top:5px" width="16" height="16" viewBox="0 0 16 16" ><ellipse cx="8" cy="7" rx="7.600" ry="6.600" fill="#38a818"/><path d="M3.500 11.500L2.500 16l5-3.200z" fill="#38a818"/><ellipse cx="8" cy="5" rx="6" ry="3.800" fill="#7ed858" opacity=".75"/><rect x="7" y="2.500" width="2" height="6" rx=".8" fill="#fff"/><circle cx="8" cy="10.500" r="1.200" fill="#fff"/></svg>Send message</div>
<div class="mi" style="top:152px"><svg class="abs" style="left:5px;top:5px" width="16" height="16" viewBox="0 0 16 16" ><g transform="rotate(-10 8 8)"><rect x="2.500" y="3" width="11.500" height="11" fill="#2878e8"/><rect x="2.500" y="3" width="11.500" height="3" fill="#1c3c78"/><path d="M3.500 2.500v2.500M5.500 2.500v2.500M7.500 2.500v2.500M9.500 2.500v2.500M11.500 2.500v2.500M13 2.500v2.500" stroke="#a8b8d0" stroke-width=".9"/><path d="M9.500 14l4.500-3.500V14z" fill="#8cc0ff"/><rect x="3" y="6.500" width="10.500" height="5" fill="#4c98f8" opacity=".7"/></g></svg>Add note</div>
<div class="mi" style="top:177px"><svg class="abs" style="left:5px;top:5px" width="16" height="16" viewBox="0 0 16 16" ><path d="M4.500 1h7l1 2.500h-9z" fill="#b8bcc4"/><rect x="3" y="3" width="10" height="10.500" rx="1.500" fill="#8c9098"/><rect x="4.300" y="4.300" width="7.400" height="4.700" fill="#3c88e0"/><path d="M4.300 7l2.500-1.500L9 8l2.700-1v2H4.300z" fill="#e8a828"/><circle cx="9.800" cy="5.600" r=".9" fill="#fff"/><rect x="5" y="10" width="6" height="2.500" fill="#d4d8dc"/><rect x="3.500" y="13.500" width="1.800" height="2.500" fill="#444"/><rect x="10.700" y="13.500" width="1.800" height="2.500" fill="#444"/></svg>Add data collection</div>
<div class="mi" style="top:202px"><svg class="abs" style="left:5px;top:5px" width="16" height="16" viewBox="0 0 16 16" ><rect x="1" y="3" width="12.500" height="10.500" fill="#f4f4f4" stroke="#888" stroke-width=".8"/><rect x="1" y="3" width="12.500" height="2.800" fill="#666c74"/><path d="M1.500 8.200h12M1.500 10.800h12M4 6v7M7 6v7M10 6v7" stroke="#b0b0b0" stroke-width=".7"/><path d="M7 2.300h5V.6l3.500 2.700L12 6V4.300H7z" fill="#38b038"/><circle cx="12" cy="12" r="3.700" fill="#188818"/><circle cx="12" cy="12" r="2.200" fill="#a8e8a0"/></svg>Scheduler</div>
<div class="mi" style="top:227px"><svg class="abs" style="left:5px;top:5px" width="16" height="16" viewBox="0 0 16 16" ><rect x="2" y="2" width="13" height="12.500" fill="#c0c4c8"/><rect x="2" y="2" width="13" height="3" fill="#2468c8"/><rect x="3" y="6" width="11" height="7.500" fill="#e8eaec"/><path d="M1 13c.5-3.500 3-5.500 6-5.500V5.300l4 3.500-4 3.500V10c-2.300 0-4.300 1-6 3z" fill="#38a838"/></svg>Change day program</div>
<div class="mi" style="top:252px"><svg class="abs" style="left:5px;top:5px" width="16" height="16" viewBox="0 0 16 16" ><g transform="translate(0 -.5)"><path d="M2.300 10.500A6 6 0 0 1 9.500 2.200" fill="none" stroke="#36c016" stroke-width="2.600"/><path d="M13.700 5.500A6 6 0 0 1 6.500 13.800" fill="none" stroke="#36c016" stroke-width="2.600"/><path d="M8.500 -.3L12.800 2.600 8.800 5z" fill="#36c016"/><path d="M7.500 16.300L3.200 13.400 7.200 11z" fill="#36c016"/><path d="M.2 8.200l3 -2.200 .8 3.800z" fill="#36c016"/><path d="M15.800 7.800l-3 2.200-.8-3.800z" fill="#36c016"/><circle cx="8" cy="8" r="4.300" fill="#f0f2f8" stroke="#8c94ac" stroke-width="1"/><path d="M6.300 6.500L8 8.200 9.800 6.600" stroke="#556" stroke-width="1" fill="none"/></g></svg>Change cycle</div>
<div class="mi" style="top:277px"><svg class="abs" style="left:5px;top:5px" width="16" height="16" viewBox="0 0 16 16" ><circle cx="8" cy="8" r="7.500" fill="#2a3a48"/><circle cx="8" cy="8" r="5.900" fill="#dcecf4"/><circle cx="8" cy="8" r="4.600" fill="#f2f8fb"/><circle cx="5.800" cy="5.900" r="1.800" fill="#ee9418"/><circle cx="10.300" cy="10.200" r="1.800" fill="#ee9418"/><path d="M10.400 3.800L5.700 12.200" stroke="#ee9418" stroke-width="1.700"/></svg>Recalculation</div>
<div class="mi" style="top:302px"><svg class="abs" style="left:5px;top:5px" width="16" height="16" viewBox="0 0 16 16" ><path d="M12.600 11.800A5.600 5.600 0 1 1 12 3.800" fill="none" stroke="#141c30" stroke-width="2.800"/><path d="M9 1.200L15.500 2 13.500 8z" fill="#141c30"/></svg>Rebuild holiday</div>
<div class="mi" style="top:327px"><svg class="abs" style="left:5px;top:5px" width="16" height="16" viewBox="0 0 16 16" ><g transform="translate(8 8) scale(.88) translate(-8 -8)"><circle cx="8" cy="8" r="7.300" fill="#2868c0"/><path d="M8 8L15.200 9.200A7.300 7.300 0 0 1 3.200 13.500z" fill="#f4c820"/><path d="M8 8L11.600 1.600A7.300 7.300 0 0 1 15 6z" fill="#38a838"/><path d="M8 8L15 6A7.300 7.300 0 0 1 15.200 9.200z" fill="#e02020"/></g></svg>Reports<i class="ma"></i></div>
<div class="mi hl" style="top:358px"><svg class="abs" style="left:4px;top:4px" width="16" height="16" viewBox="0 0 16 16" ><path d="M1.500 1h10L14.500 4v11h-13z" fill="#f8f8f4" stroke="#d0d0c8" stroke-width=".7"/><rect x="2.500" y="4.300" width="11" height="2.700" fill="#58a030"/><rect x="2.500" y="7" width="11" height="7" fill="#e4f0d4"/><path d="M2.500 9.300h11M2.500 11.600h11M6 7v7M9.800 7v7" stroke="#b8d0a0" stroke-width=".7"/><rect x="2.500" y="7" width="3.500" height="7" fill="#c8e0a8" opacity=".8"/></svg>View timecard</div>
<div class="mi" style="top:383px"><svg class="abs" style="left:5px;top:5px" width="16" height="16" viewBox="0 0 16 16" ><rect x="1" y="1" width="14" height="13.500" rx="1" fill="#f4f4f4" stroke="#9098a4" stroke-width=".8"/><rect x="1" y="1" width="14" height="3.300" fill="#3888e8"/><rect x="1" y="13.500" width="14" height="1.800" fill="#a0a4a8"/><g fill="#e86820"><rect x="3.300" y="6" width="2" height="1.600"/><rect x="7" y="6" width="2" height="1.600"/><rect x="10.700" y="6" width="2" height="1.600"/><rect x="3.300" y="9" width="2" height="1.600"/><rect x="7" y="9" width="2" height="1.600"/><rect x="10.700" y="9" width="2" height="1.600"/></g></svg>Yearly view</div>
<div class="mi" style="top:408px"><svg class="abs" style="left:5px;top:5px" width="16" height="16" viewBox="0 0 16 16" ><path d="M0 15.300h16" stroke="#a06820" stroke-width="1.400"/><path d="M11.500 14.500c-.8-3-.6-6.500 0-9.500" stroke="#8a5a20" stroke-width="1.700" fill="none"/><path d="M11.500 5c-2-2.500-5-2.500-6.500-.5 2-.6 4.500-.2 6.500.5zM11.500 5c1.500-3 4-3 5-1.500-1.800-.3-3.500.3-5 1.500zM11.500 5c-2-.3-4.300 1.300-4.500 4 1-2 2.500-3.500 4.500-4zM11.500 5c2 0 3.800 1.800 3.500 4.500-.6-2-1.800-3.500-3.500-4.500z" fill="#189018" stroke="#189018" stroke-width=".8"/><circle cx="5" cy="11" r="4" fill="#f8f8f8"/><path d="M5 7a4 4 0 0 0-4 4h4z" fill="#e82020"/><path d="M5 15a4 4 0 0 0 4-4H5z" fill="#2060d8"/><path d="M5 7a4 4 0 0 1 4 4H5z" fill="#f8d020"/></svg>View holiday card</div>
<div class="mi" style="top:433px"><svg class="abs" style="left:5px;top:5px" width="16" height="16" viewBox="0 0 16 16" ><circle cx="8" cy="8" r="7.400" fill="#d01010"/><circle cx="8" cy="8" r="5.200" fill="#f0e4ec"/><rect x="7" y="4" width="2" height="5.200" rx=".6" fill="#d01010"/><circle cx="8" cy="11" r="1.100" fill="#d01010"/></svg>View anomalies</div>
<div class="mi" style="top:458px"><svg class="abs" style="left:5px;top:5px" width="16" height="16" viewBox="0 0 16 16" ><rect x="1.200" y="2.500" width="13.600" height="12.500" rx="1.500" fill="#fafafa" stroke="#484c54" stroke-width="1.100"/><rect x="1.800" y="3" width="12.400" height="3" fill="#78a8dc"/><rect x="4" y=".6" width="1.500" height="3.400" fill="#c8d4e0" stroke="#667" stroke-width=".4"/><rect x="10.500" y=".6" width="1.500" height="3.400" fill="#c8d4e0" stroke="#667" stroke-width=".4"/><path d="M6.600 9l1.700-1.200V13M6.600 13.200h3.400" stroke="#222" stroke-width="1.200" fill="none"/></svg>Daily view</div>
<div class="mi" style="top:483px"><svg class="abs" style="left:5px;top:5px" width="16" height="16" viewBox="0 0 16 16" ><path d="M4 .8h6.500l3 3V9H4z" fill="#fafafa" stroke="#d0d0d0" stroke-width=".7"/><path d="M1 6.500h14v8.300H1z" fill="url(#gfold)" stroke="#e8a838" stroke-width=".7"/><path d="M1 6.500h14v2.500H1z" fill="#fff0c0" opacity=".8"/><rect x="11" y="11" width="3.500" height="3.500" fill="#98b4d0"/><path d="M11.800 11.500l2 2.500M13.800 11.500l-2 2.500" stroke="#345" stroke-width=".7"/></svg>View files</div>
<div class="mi" style="top:508px"><svg class="abs" style="left:5px;top:5px" width="16" height="16" viewBox="0 0 16 16" ><circle cx="6.500" cy="10" r="5.800" fill="#2870d8"/><path d="M2.500 6.500c1.500-1 3.500-1.200 4.500 0 .8 1-.5 2-1.500 2.500-.8.500-.5 1.800.5 2.200 1 .5.500 2.500-.8 3.500-2-.5-3.800-2-4.300-4 .2-1 .8-1.500 1-2.200.2-.8 0-1.400.6-2zM8.500 9.500c1-.6 2.300-.3 3.500.8-.2 2-1.300 3.800-3 4.800-.8-1-.6-2 0-3 .4-.8-.9-1.800-.5-2.600z" fill="#38b028"/><path d="M7.500 9L11.500 4.500" stroke="#888" stroke-width="1.100"/><path d="M10.300 3.800L13.300.5l2.500 2.300-3 3.300z" fill="#e81020"/></svg>View booking locations</div>
<div class="abs" style="left:2px;top:354px;width:161px;height:1px;background:#e0e0e0"></div>
</div>
<svg class="abs" style="left:931px;top:542.5px" width="18" height="24" viewBox="0 0 18 24" ><path d="M5.200 13.500V2.200C5.200 .2 9 .2 9 2.200V6.500C9.500 5.500 12 5.600 12 7C12.500 6 15 6.200 15 7.600C15.500 6.800 17.800 7 17.800 8.600V15C17.800 19 16 21 15 23.500H7.500C6.500 21 3 17.500 1 15C-.5 13 1.500 11 3.300 12.300Z" fill="#fff" stroke="#101828" stroke-width="1.100" stroke-linejoin="round"/><path d="M9 6.500V11M12 7V11M15 7.600V11" stroke="#101828" stroke-width="1"/></svg>
</body></html>
